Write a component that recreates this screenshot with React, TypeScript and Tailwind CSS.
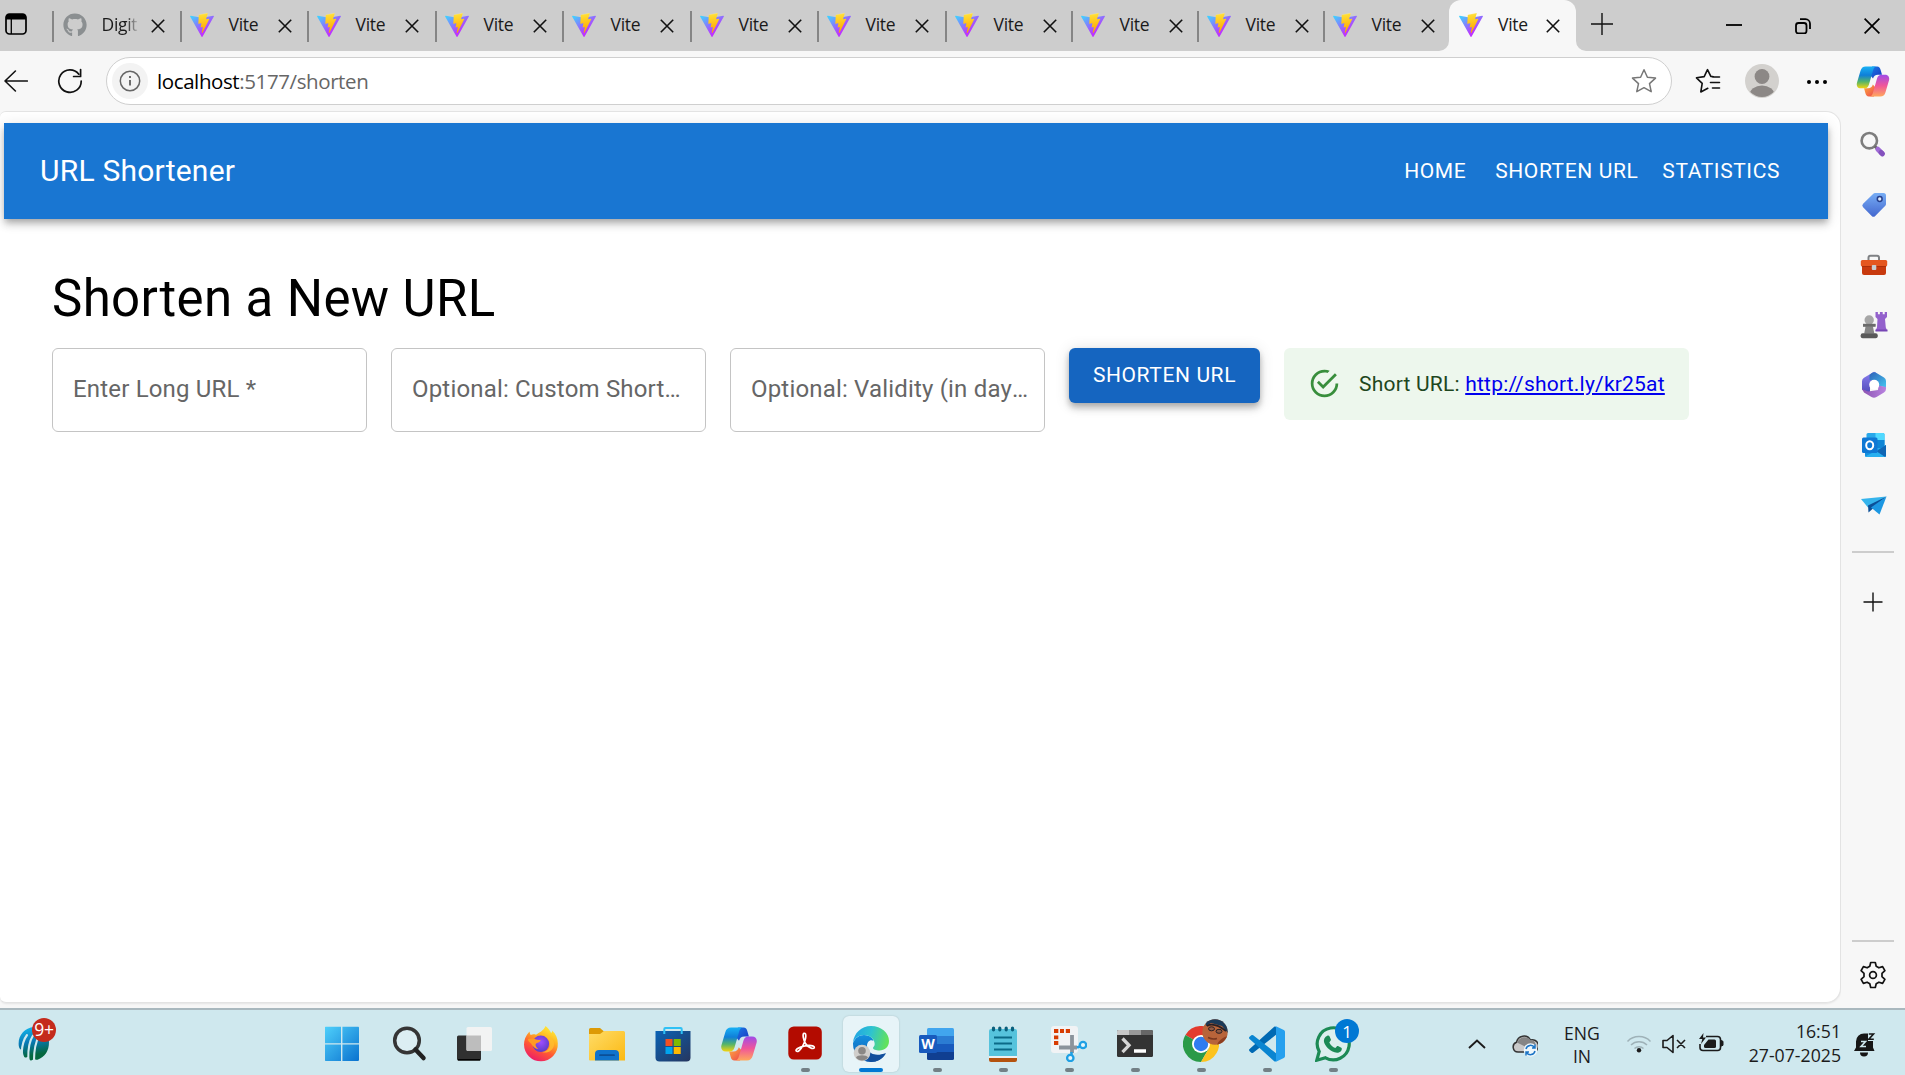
import React from "react";
import { FaGithub } from "react-icons/fa";

const UI = "font-['Open_Sans','Noto_Sans',sans-serif]";

function ViteLogo() {
  return (
    <svg viewBox="0 0 256 257" className="h-6 w-6 shrink-0">
      <defs>
        <linearGradient id="viteA" x1="-.828%" x2="57.636%" y1="7.652%" y2="78.411%">
          <stop offset="0%" stopColor="#41D1FF" />
          <stop offset="100%" stopColor="#BD34FE" />
        </linearGradient>
        <linearGradient id="viteB" x1="43.376%" x2="50.316%" y1="2.242%" y2="89.03%">
          <stop offset="0%" stopColor="#FFEA83" />
          <stop offset="8.333%" stopColor="#FFDD35" />
          <stop offset="100%" stopColor="#FFA800" />
        </linearGradient>
      </defs>
      <path fill="url(#viteA)" d="M255.153 37.938L134.897 252.976c-2.483 4.44-8.862 4.466-11.382.048L.875 37.958c-2.746-4.814 1.371-10.646 6.827-9.67l120.385 21.517a6.537 6.537 0 0 0 2.322-.004l117.867-21.483c5.438-.991 9.574 4.796 6.877 9.62Z" />
      <path fill="url(#viteB)" d="M185.432.063L96.44 17.501a3.268 3.268 0 0 0-2.634 3.014l-5.474 92.456a3.268 3.268 0 0 0 3.997 3.378l24.777-5.718c2.318-.535 4.413 1.507 3.936 3.838l-7.361 36.047c-.495 2.426 1.782 4.5 4.151 3.78l15.304-4.649c2.372-.72 4.652 1.36 4.15 3.788l-11.698 56.621c-.732 3.542 3.979 5.473 5.943 2.437l1.313-2.028l72.516-144.72c1.215-2.423-.88-5.186-3.54-4.672l-25.505 4.922c-2.396.462-4.435-1.77-3.759-4.114l16.646-57.705c.677-2.35-1.37-4.583-3.769-4.113Z" />
    </svg>
  );
}

function Cross() {
  return (
    <svg viewBox="0 0 14 14" className="h-3.5 w-3.5 shrink-0" stroke="#111" strokeWidth="1.6" fill="none">
      <path d="M.8 .8 13.2 13.2M13.2 .8 .8 13.2" />
    </svg>
  );
}

function CopilotLogo({ className }: { className: string }) {
  return (
    <svg viewBox="0 0 36 34" className={className}>
      <defs>
        <linearGradient id="cpA" x1="0" y1="0" x2="0" y2="1">
          <stop offset="0" stopColor="#19b1f5" />
          <stop offset=".4" stopColor="#0f7fd8" />
          <stop offset=".7" stopColor="#55b56a" />
          <stop offset="1" stopColor="#f4d40e" />
        </linearGradient>
        <linearGradient id="cpB" x1="0" y1="0" x2="0" y2="1">
          <stop offset="0" stopColor="#a04be8" />
          <stop offset=".5" stopColor="#f0569a" />
          <stop offset="1" stopColor="#ffa85c" />
        </linearGradient>
        <linearGradient id="cpC" x1="0" y1="0" x2="1" y2="1">
          <stop offset="0" stopColor="#1a7fe8" />
          <stop offset="1" stopColor="#1a35c0" />
        </linearGradient>
        <linearGradient id="cpD" x1="0" y1="0" x2="1" y2="1">
          <stop offset="0" stopColor="#ffb13d" />
          <stop offset="1" stopColor="#ec3f4e" />
        </linearGradient>
      </defs>
      <path fill="url(#cpC)" d="M17 .5h5.5c2.3 0 3.2 1.4 3.8 3.5l1.6 5.5h-4.5c-3 0-4.600 1.500-5.400 4.200L14 9z" />
      <path fill="url(#cpD)" d="M19 33.500h-5.500c-2.300 0-3.200-1.400-3.800-3.500L8.200 24.500h4.300c3 0 4.500-1.500 5.300-4.200L22 25z" />
      <path fill="url(#cpA)" d="M10 .5h11.500c-2 .5-2.800 2-3.500 4.500l-4.500 15.500c-.8 2.700-2.300 4-5 4H5c-4 0-5.500-3-4.500-6.500L4.300 5.200C5.200 2 7 .5 10 .5z" />
      <path fill="url(#cpB)" d="M26 33.500H14.500c2-.5 2.800-2 3.500-4.500l4.500-15.500c.8-2.700 2.300-4 5-4H31c4 0 5.500 3 4.500 6.500l-3.800 12.800c-.9 3.200-2.700 4.700-5.700 4.700z" />
    </svg>
  );
}

/* ---------- Tab strip ---------- */

function Tab({ width, kind = "vite" }: { width: string; kind?: "vite" | "github" }) {
  return (
    <div className={`${width} flex h-full shrink-0 items-center pb-[2px]`}>
      <div className="mt-[3px] h-[31px] w-[1.5px] shrink-0 bg-[#858585]" />
      {kind === "vite" ? (
        <>
          <div className="ml-[8px] flex h-6 w-6 shrink-0 items-center"><ViteLogo /></div>
          <span className="mt-[-1px] ml-[15px] w-[49px] text-[17.5px] tracking-[-0.3px] text-[#1a1a1a]">Vite</span>
        </>
      ) : (
        <>
          <FaGithub className="ml-[9px] h-6 w-6 shrink-0 text-[#8b8f91]" />
          <span className="mt-[-1px] ml-[15px] w-[49px] overflow-hidden">
            <span className="block w-[37px] overflow-hidden bg-linear-to-r from-[#1a1a1a] from-65% to-[#1a1a1a00] bg-clip-text text-[17.5px] tracking-[-0.3px] text-transparent">Digit</span>
          </span>
        </>
      )}
      <div className="mt-[2px] flex"><Cross /></div>
    </div>
  );
}

function TabStrip() {
  return (
    <div className="flex h-[51px] shrink-0 bg-[#cdcdcd]">
      <div className="flex w-[52px] shrink-0 items-center pl-[5px]">
        <svg viewBox="0 0 22 22" className="mt-[-3px] h-[22px] w-[22px]">
          <rect x="1" y="1" width="20" height="20" rx="3.500" fill="none" stroke="#000" strokeWidth="1.700" />
          <path d="M1 6.500V4a3 3 0 0 1 3-3h14a3 3 0 0 1 3 3v2.500z" fill="#000" />
          <path d="M6.300 6v15" stroke="#000" strokeWidth="1.300" />
        </svg>
      </div>
      <Tab width="w-[128px]" kind="github" />
      <Tab width="w-[127px]" />
      <Tab width="w-[128px]" />
      <Tab width="w-[127px]" />
      <Tab width="w-[128px]" />
      <Tab width="w-[127px]" />
      <Tab width="w-[128px]" />
      <Tab width="w-[126px]" />
      <Tab width="w-[126px]" />
      <Tab width="w-[126px]" />
      <Tab width="w-[126px]" />
      <div className="relative flex h-full w-[127px] shrink-0 items-center rounded-t-[12px] bg-[#f7f7f7] pb-[2px] pl-[10px]">
        <svg viewBox="0 0 10 10" className="absolute bottom-0 left-[-10px] h-2.5 w-2.5"><path d="M10 0v10H0A10 10 0 0 0 10 0z" fill="#f7f7f7" /></svg>
        <svg viewBox="0 0 10 10" className="absolute right-[-10px] bottom-0 h-2.5 w-2.5"><path d="M0 0v10h10A10 10 0 0 1 0 0z" fill="#f7f7f7" /></svg>
        <ViteLogo />
        <span className="mt-[-1px] ml-[15px] w-[48px] text-[17.5px] tracking-[-0.3px] text-[#1a1a1a]">Vite</span>
        <div className="mt-[2px] flex"><Cross /></div>
      </div>
      <div className="flex flex-1 items-center">
        <svg viewBox="0 0 22 22" className="mt-[-4px] ml-[15px] h-[22px] w-[22px]" stroke="#111" strokeWidth="1.400"><path d="M11 0v22M0 11h22" /></svg>
        <div className="flex-1" />
        <svg viewBox="0 0 16 16" className="mt-[-1px] mr-[53px] h-4 w-4" stroke="#000" strokeWidth="1.800"><path d="M0 8h16" /></svg>
        <svg viewBox="0 0 16 16" className="mr-[53px] h-4 w-4" fill="none" stroke="#000" strokeWidth="1.800">
          <rect x="1" y="5" width="10.500" height="10.500" rx="2.500" />
          <path d="M5 1.200h5.500a4.500 4.500 0 0 1 4.500 4.500V11" />
        </svg>
        <svg viewBox="0 0 16 16" className="mr-[25px] h-4 w-4" stroke="#000" strokeWidth="1.700"><path d="M.6 .6 15.400 15.400M15.400 .6 .6 15.400" /></svg>
      </div>
    </div>
  );
}

/* ---------- Address bar ---------- */

function Toolbar() {
  return (
    <div className="flex h-[60px] shrink-0 items-center bg-[#f7f7f7]">
      <svg viewBox="0 0 24 22" className="mt-[-1px] ml-1 h-[22px] w-6" fill="none" stroke="#111" strokeWidth="1.600" strokeLinejoin="round" strokeLinecap="round"><path d="M23.400 11H1M11.400 1 1 11l10.400 10" /></svg>
      <svg viewBox="0 0 26 26" className="ml-[29px] h-[26px] w-[26px]" fill="none" stroke="#111" strokeWidth="1.700" strokeLinecap="round"><path d="M24.200 13A11.200 11.200 0 1 1 21.800 6.200M23.600 1.500v7h-7" strokeLinejoin="round" /></svg>
      <div className="ml-[23px] flex h-[48px] w-[1566px] items-center rounded-full border-[1.5px] border-[#cfcfcf] bg-white pl-[5px]">
        <div className="flex h-9 w-9 items-center justify-center rounded-full bg-[#f3f3f3]">
          <svg viewBox="0 0 22 22" className="h-[22px] w-[22px]" fill="none" stroke="#666" strokeWidth="1.500"><circle cx="11" cy="11" r="9.700" /><path d="M11 10v5.500M11 6v1.900" strokeWidth="1.900" /></svg>
        </div>
        <span className={`${UI} mt-px ml-[9px] text-[20.5px] tracking-[-0.4px] text-[#666]`}><span className="text-black">localhost</span>:5177/shorten</span>
        <div className="flex-1" />
        <svg viewBox="0 0 26 26" className="mr-[14px] h-[26px] w-[26px]" fill="none" stroke="#777" strokeWidth="1.500" strokeLinejoin="round"><path d="M13 1.800 16.400 9.200 24.500 10.100 18.500 15.600 20.200 23.700 13 19.700 5.800 23.700 7.500 15.600 1.500 10.100 9.600 9.200z" /></svg>
      </div>
      <svg viewBox="0 0 26 26" className="ml-[23px] h-[26px] w-[26px]" fill="none" stroke="#111" strokeWidth="1.600" strokeLinejoin="round" strokeLinecap="round"><path d="M18.500 8.800 15.800 8.400 12.500 1.600 9.200 8.600 1.500 9.800 7.200 15.300 5.800 24 12.800 20.300M17.500 9h7M15.500 14.500h9M17.500 20h7" /></svg>
      <svg viewBox="0 0 34 34" className="ml-[24px] h-[34px] w-[34px]">
        <defs><clipPath id="prof"><circle cx="17" cy="17" r="16" /></clipPath></defs>
        <circle cx="17" cy="17" r="17" fill="#d3d1ce" />
        <g clipPath="url(#prof)" fill="#8c8886"><circle cx="17" cy="12.500" r="7.400" /><ellipse cx="17" cy="31" rx="12.500" ry="9.500" /></g>
      </svg>
      <svg viewBox="0 0 20 4" className="mt-px ml-[28px] h-1 w-5"><circle cx="2" cy="2" r="2" /><circle cx="10" cy="2" r="2" /><circle cx="18" cy="2" r="2" /></svg>
      <CopilotLogo className="ml-[29px] h-[31px] w-[34px]" />
    </div>
  );
}

/* ---------- Page content ---------- */

function Field({ label }: { label: string }) {
  return (
    <div className="flex h-[84px] w-[315px] items-center rounded-[6px] border border-[#c4c4c4] pb-[2px] pl-5">
      <span className="w-[279px] shrink-0 truncate text-[24px] tracking-[0.18px] text-[#666]">{label}</span>
    </div>
  );
}

function Page() {
  return (
    <main className="h-[892px] w-[1841px] overflow-hidden rounded-tl-[6px] rounded-r-[15px] rounded-bl-[6px] border border-l-0 border-[#e3e3e3] bg-white pt-[11px] pl-1 font-[Roboto,sans-serif] shadow-[0_1px_2px_rgba(0,0,0,0.08)]">
      <header className="flex h-[96px] w-[1824px] items-center bg-[#1976d2] px-9 text-white shadow-[0px_3px_6px_-1.5px_rgba(0,0,0,0.2),0px_6px_7.5px_0px_rgba(0,0,0,0.14),0px_1.5px_15px_0px_rgba(0,0,0,0.12)]">
        <h6 className="mt-[-2px] flex-1 text-[30px] font-normal tracking-[0.225px]">URL Shortener</h6>
        <nav className="mt-[2px] flex text-[21px] font-normal tracking-[0.6px]">
          <a className="min-w-[96px] px-3 text-center">HOME</a>
          <a className="px-3">SHORTEN URL</a>
          <a className="px-3">STATISTICS</a>
        </nav>
      </header>
      <section className="pt-[48px] pl-[48px]">
        <h4 className="h-[63px] text-[51px] leading-[63px] tracking-[0.375px] text-black">Shorten a New URL</h4>
        <div className="mt-[18px] flex items-start gap-6">
          <Field label="Enter Long URL *" />
          <Field label="Optional: Custom Shortcode" />
          <Field label="Optional: Validity (in days)" />
          <button className="h-[55px] w-[191px] rounded-[6px] bg-[#1565c0] text-[21px] font-normal tracking-[0.6px] whitespace-nowrap text-white shadow-[0px_3px_6px_-1.5px_rgba(0,0,0,0.2),0px_6px_7.5px_0px_rgba(0,0,0,0.14),0px_1.5px_15px_0px_rgba(0,0,0,0.12)]">SHORTEN URL</button>
          <div className="flex h-[72px] w-[405px] items-center rounded-[6px] bg-[#edf7ed] pl-6 text-[21px] tracking-[0.21px] whitespace-nowrap text-[#1e4620]">
            <svg viewBox="0 0 24 24" className="mt-[-2px] mr-[18px] h-[33px] w-[33px]" fill="#388e3c"><path d="M20,12A8,8 0 0,1 12,20A8,8 0 0,1 4,12A8,8 0 0,1 12,4C12.76,4 13.5,4.11 14.2,4.31L15.77,2.74C14.61,2.26 13.34,2 12,2A10,10 0 0,0 2,12A10,10 0 0,0 12,22A10,10 0 0,0 22,12M7.91,10.08L6.5,11.5L11,16L21,6L19.59,4.58L11,13.17L7.91,10.08Z" /></svg>
            <span className="leading-[30px]">Short URL: <a className="text-[#0000ee] underline">http://short.ly/kr25at</a></span>
          </div>
        </div>
      </section>
    </main>
  );
}

/* ---------- Edge sidebar ---------- */

function SideCell({ children }: { children: React.ReactNode }) {
  return <div className="flex h-[60.2px] shrink-0 items-center justify-center pl-px">{children}</div>;
}

function Sidebar() {
  return (
    <aside className="flex h-[897px] flex-1 flex-col bg-[#f7f7f7] pt-[3px]">
      <SideCell>
        <svg viewBox="0 0 28 28" className="mr-px h-7 w-7">
          <circle cx="10.300" cy="10.700" r="7.700" fill="none" stroke="#7d7d7d" strokeWidth="2.600" />
          <path d="m15.800 16.200 2.500 2.500" stroke="#6a6a6a" strokeWidth="3" />
          <path d="m18.800 19.200 4.500 4.500" stroke="#a06bd6" strokeWidth="5" strokeLinecap="round" />
          <path d="m22 22.400 1.400 1.400" stroke="#8452be" strokeWidth="5" strokeLinecap="round" />
        </svg>
      </SideCell>
      <SideCell>
        <svg viewBox="0 0 28 28" className="mt-px h-7 w-7">
          <defs><linearGradient id="tag" x1="0" y1="0" x2="0" y2="1"><stop offset="0" stopColor="#77adf5" /><stop offset="1" stopColor="#4468cf" /></linearGradient></defs>
          <path d="M15 2h8.500A2.500 2.500 0 0 1 26 4.500V13a2.500 2.500 0 0 1-.7 1.700L15.200 24.900a2.500 2.500 0 0 1-3.500 0l-8.600-8.700a2.500 2.500 0 0 1 0-3.500L13.300 2.700A2.500 2.500 0 0 1 15 2z" fill="url(#tag)" />
          <circle cx="19.700" cy="8" r="2.400" fill="#dce9fb" stroke="#263f8c" strokeWidth="1.500" />
        </svg>
      </SideCell>
      <SideCell>
        <svg viewBox="0 0 28 28" className="mt-[2px] h-7 w-7">
          <path d="M8.500 10V6.800A2 2 0 0 1 10.500 4.800h6.500A2 2 0 0 1 19 6.800V10" fill="none" stroke="#7f8184" strokeWidth="2" />
          <rect x="2" y="12" width="24" height="12" rx="2" fill="#c83a0e" />
          <rect x=".8" y="9" width="26.400" height="6.500" rx="1.500" fill="#e5571f" />
          <path d="M2 15.500h24" stroke="#ad2f0a" />
          <rect x="11.800" y="14" width="4.500" height="5" rx="1" fill="#c9cdd0" />
        </svg>
      </SideCell>
      <SideCell>
        <svg viewBox="0 0 28 28" className="h-7 w-7">
          <path d="M15.500 1h2.400v2.200h2V1h2.800v2.200h2V1H27v5l-2 2 .8 8.500 1.500 3.500H15.500l1.500-3.500L17.500 8l-2-2z" fill="#9361cc" />
          <path d="M15.500 18.500h12v2h-12z" fill="#7746b5" />
          <circle cx="9.200" cy="9" r="4.700" fill="#a6a6a6" />
          <path d="M3 12.800h12.500v3H13l1.300 6.700H4.200L5.500 15.800H3z" fill="#858585" />
          <path d="M3 13h12.500v2.500H3z" fill="#6b6b6b" />
          <rect x=".7" y="22.300" width="17" height="5" rx="2" fill="#5a5a5a" />
        </svg>
      </SideCell>
      <SideCell>
        <svg viewBox="0 0 28 28" className="h-7 w-7">
          <defs>
            <linearGradient id="mA" x1="0" y1="0" x2="1" y2="1"><stop offset="0" stopColor="#2e62b8" /><stop offset="1" stopColor="#45c5f0" /></linearGradient>
            <linearGradient id="mB" x1="0" y1="0" x2="0" y2="1"><stop offset="0" stopColor="#8b7ff0" /><stop offset="1" stopColor="#4e49b8" /></linearGradient>
            <linearGradient id="mC" x1="0" y1="0" x2="1" y2="0"><stop offset="0" stopColor="#8b52b0" /><stop offset="1" stopColor="#b983e0" /></linearGradient>
          </defs>
          <path d="M14 .8 4 6.700A4 4 0 0 0 2 10.200v8.500L10 23V12l6-4V1.500z" fill="url(#mB)" />
          <path d="M11.500 2.200Q14 .5 16.500 2L24 6.500A4 4 0 0 1 26 10v6.500l-7.500-1.800V12L9.500 8.800V4z" fill="url(#mA)" />
          <path d="M26 16v2a4 4 0 0 1-2 3.500L16.500 26q-2.500 1.500-5 0L4 21.500 2 18l6 2.500L18 19l.5-4.500z" fill="url(#mC)" />
          <circle cx="14.200" cy="13.800" r="5" fill="#ffffff" />
        </svg>
      </SideCell>
      <SideCell>
        <svg viewBox="0 0 28 28" className="h-7 w-7">
          <rect x="6.500" y="2" width="18" height="17" rx="1.500" fill="#28a8ea" />
          <path d="M15.500 2H23a1.500 1.500 0 0 1 1.500 1.500V9h-9z" fill="#50d9ff" />
          <path d="M15.500 9h9v8h-9z" fill="#0f86d6" />
          <path d="m5 14 11 6 10-6v10.500a1.500 1.500 0 0 1-1.500 1.500h-18A1.500 1.500 0 0 1 5 24.500z" fill="#1490df" />
          <path d="m26 14-10 6.500 9 5.500a1.500 1.500 0 0 0 1-1.500z" fill="#1066b5" />
          <path d="M5 25.500 16 20l9 6H6.500z" fill="#28b0f0" />
          <rect x="2" y="6.500" width="15.500" height="15.500" rx="1.500" fill="#0f78d4" />
          <ellipse cx="9.700" cy="14.200" rx="3.500" ry="4" fill="none" stroke="#fff" strokeWidth="2" />
        </svg>
      </SideCell>
      <SideCell>
        <svg viewBox="0 0 28 28" className="h-7 w-7">
          <path d="M1 8 26.500 5.500 8 16.500z" fill="#35b4ec" />
          <path d="m8 14.500 18.500-9L8.500 21.500z" fill="#0b4f97" />
          <path d="m11 16.500 15.500-11L19.500 23.500z" fill="#1c97e2" />
        </svg>
      </SideCell>
      <div className="mx-auto mt-[16px] h-[1.5px] w-[42px] shrink-0 bg-[#cdcdcd]" />
      <svg viewBox="0 0 20 20" className="mx-auto mt-[39px] h-5 w-5 shrink-0" stroke="#111" strokeWidth="1.400"><path d="M10 .5v19M.5 10h19" /></svg>
      <div className="flex-1" />
      <div className="mx-auto h-[2px] w-[42px] shrink-0 bg-[#cdcdcd]" />
      <svg viewBox="0 0 26 28" className="mx-auto mt-[19px] mb-[19px] h-7 w-[26px] shrink-0" fill="none" stroke="#111" strokeWidth="1.700" strokeLinejoin="round">
        <path d="M10.700 1.500h4.600l.9 3.800 2.700 1.500 3.700-1.200 2.300 4-2.900 2.700v3.400l2.900 2.700-2.300 4-3.700-1.200-2.700 1.500-.9 3.800h-4.600l-.9-3.800-2.700-1.500-3.700 1.200-2.300-4L4 15.700v-3.400L1.100 9.600l2.300-4 3.700 1.200 2.700-1.500z" />
        <circle cx="13" cy="14" r="3.400" />
      </svg>
    </aside>
  );
}

/* ---------- Taskbar ---------- */

function TaskIcon({ children, mark = "none" }: { children: React.ReactNode; mark?: "none" | "open" | "active" }) {
  return (
    <div className="relative flex h-full w-[66px] shrink-0 justify-center">
      {mark === "active" && <div className="absolute top-[6px] h-[56px] w-[56px] rounded-[6px] bg-[#e7f4f8] shadow-[0_0_2px_rgba(0,0,0,0.18)]" />}
      <div className="relative mt-[16px] h-9 w-9">{children}</div>
      {mark === "open" && <div className="absolute top-[58px] h-1 w-[9px] rounded-full bg-[#738086]" />}
      {mark === "active" && <div className="absolute top-[58px] h-1 w-6 rounded-full bg-[#0078d4]" />}
    </div>
  );
}

function Apps() {
  return (
    <>
      <TaskIcon>
        <svg viewBox="1 0 36 36">
          <defs><linearGradient id="win" x1="0" y1="0" x2="1" y2="1" gradientUnits="objectBoundingBox"><stop offset="0" stopColor="#4fd0fb" /><stop offset="1" stopColor="#0a72cf" /></linearGradient></defs>
          <path d="M1.500.7H17v16.600H.7V1.500zM18.400.7H34.500l.5.8v15.800H18.400zM.7 18.500H17V35H1.500l-.8-.8zM18.400 18.500H35v15.700l-.8.8H18.400z" fill="url(#win)" />
        </svg>
      </TaskIcon>
      <TaskIcon>
        <svg viewBox="0 0 36 36" fill="none"><circle cx="16" cy="14.500" r="12.300" fill="#dceef3" stroke="#353535" strokeWidth="3.500" /><path d="m24.500 23.500 8 8.500" stroke="#222" strokeWidth="4.500" strokeLinecap="round" /></svg>
      </TaskIcon>
      <TaskIcon>
        <svg viewBox="0 0 36 36">
          <rect x="0" y="9.500" width="24" height="25" rx="1.500" fill="#303030" /><path d="M1 33.800h22" stroke="#000" strokeWidth="1.500" />
          <rect x="9.500" y="1" width="25.500" height="24" rx="1.500" fill="#f2f3f3" /><path d="M9.500 9.500H24V25H11a1.500 1.500 0 0 1-1.500-1.500z" fill="#bdbdbd" />
        </svg>
      </TaskIcon>
      <TaskIcon>
        <svg viewBox="0 0 36 36">
          <defs>
            <linearGradient id="ffA" x1=".8" y1="0" x2=".3" y2="1"><stop offset="0" stopColor="#fff13c" /><stop offset=".35" stopColor="#ffb321" /><stop offset=".65" stopColor="#ff5a33" /><stop offset="1" stopColor="#ec1a6b" /></linearGradient>
            <radialGradient id="ffB" cx=".5" cy=".4" r=".6"><stop offset="0" stopColor="#a04dff" /><stop offset="1" stopColor="#5b3cc4" /></radialGradient>
          </defs>
          <path d="M22.500 0c2.500 1.500 4.500 4.500 5.500 7 1-.5 1.200-1.500 1-2.500 4 3.500 5.800 8 5.800 13A17 17 0 0 1 18 35.300 17 17 0 0 1 1 18.500C1 14.500 2.500 9.500 6.500 5.500c.2 1.500.5 2.500 1.200 3.500 2-.8 3.300-.8 5.300-.3C16 6.500 20.500 5 22.500 0z" fill="url(#ffA)" />
          <circle cx="17.800" cy="17.800" r="8.300" fill="url(#ffB)" />
          <path d="M5 13c3-1 6-.5 8 .5 1.500.8 3.500 0 4.800.8-.5 1.500-2.800 2.500-4.300 3-1.700.8-.8 4 2 5.700-5-.5-6-4-8-6-1.500-1.500-2.500-2-2.500-4z" fill="#ff9a24" />
          <path d="M21 9.500c4 1.500 6.500 4.500 6 9.500-.5 4-4 7-8 7 5 2 11-1 12-7C31.500 14 27 9 21 9.500z" fill="#ffbe2e" opacity=".8" />
        </svg>
      </TaskIcon>
      <TaskIcon>
        <svg viewBox="0 0 36 36">
          <defs><linearGradient id="fold" x1="0" y1="0" x2="1" y2="1"><stop offset="0" stopColor="#ffdc68" /><stop offset="1" stopColor="#fbb912" /></linearGradient></defs>
          <path d="M0 3.500A1.500 1.500 0 0 1 1.500 2H11l4 3.500V10H0z" fill="#dd9a06" />
          <path d="M0 8h11l4-3h19.500A1.500 1.500 0 0 1 36 6.500v28H1A1 1 0 0 1 0 33.500z" fill="url(#fold)" />
          <path d="M6 34.500V28a4 4 0 0 1 4-4h16a4 4 0 0 1 4 4v6.500z" fill="#0f73cc" /><path d="M11 29.200h14" stroke="#0b4f97" strokeWidth="1.800" strokeLinecap="round" />
        </svg>
      </TaskIcon>
      <TaskIcon>
        <svg viewBox="0 0 36 36">
          <defs><linearGradient id="store" x1="0" y1="0" x2="1" y2="1"><stop offset="0" stopColor="#0a62b5" /><stop offset="1" stopColor="#26365e" /></linearGradient></defs>
          <path d="M.5 5h35v26.500a4 4 0 0 1-4 4h-27a4 4 0 0 1-4-4z" fill="url(#store)" />
          <path d="M9.300 8V3a1 1 0 0 1 1-1h15.400a1 1 0 0 1 1 1v5" fill="none" stroke="#2fc1f5" strokeWidth="2" />
          <path d="M10.500 13h7v7h-7z" fill="#f25022" /><path d="M18.700 13h7v7h-7z" fill="#7fba00" /><path d="M10.500 21h7v7h-7z" fill="#00a4ef" /><path d="M18.700 21h7v7h-7z" fill="#ffb900" />
        </svg>
      </TaskIcon>
      <TaskIcon><CopilotLogo className="mt-px h-[34px] w-9" /></TaskIcon>
      <TaskIcon mark="open">
        <svg viewBox="0 0 36 36">
          <rect x="1.300" y=".5" width="33.500" height="33" rx="5.500" fill="#b30b00" />
          <path d="M17 7.300c2.800-.6 1.800 5.500.5 8.700-1.500 4-4.800 9.500-7.300 9.500-3.500-.8 1-4.700 7.800-5.700 3.500-.6 9.700-.6 9.300 1.700-.8 2.800-6.800-.8-8.800-4C16.800 14.700 15 8 17 7.300z" fill="none" stroke="#fff" strokeWidth="1.700" />
        </svg>
      </TaskIcon>
      <TaskIcon mark="active">
        <svg viewBox="0 0 36 36">
          <defs>
            <linearGradient id="edA" x1="0" y1=".2" x2="1" y2=".4"><stop offset="0" stopColor="#1fa3e6" /><stop offset=".5" stopColor="#2fc3cf" /><stop offset="1" stopColor="#62e25a" /></linearGradient>
            <linearGradient id="edB" x1="0" y1="0" x2="0" y2="1"><stop offset="0" stopColor="#1490df" /><stop offset="1" stopColor="#0f5bb0" /></linearGradient>
          </defs>
          <path d="M0 17C2 12 6 9 11 9c6 0 9.500 4 9.500 6-3-2-7 1-6.500 6 .8 7 8 10 18.500 7C29 33 24 36 18 36 8 36 0 28 0 18z" fill="url(#edB)" />
          <path d="M14 20c.5 8 9 11 19 7-3 6-9 9-15 9-6-2-9.500-9-4-16z" fill="#124f9c" />
          <path d="M0 16.500C1 7 8.500 0 18 0c10.500 0 18 7 18 15 0 6-4.500 9.500-9.500 9.500-3.500 0-6.500-1-6.500-2.500 0-1 1.700-1.500 1.700-4C21.700 13 17 9 11 9 6 9 2 12 0 16.500z" fill="url(#edA)" />
          <circle cx="9" cy="27" r="8.300" fill="#d0cecb" /><circle cx="9" cy="24.800" r="3.800" fill="#8a8785" /><path d="M3 31.500c1.500-3 10.500-3 12 0-2.500 4-9.500 4-12 0z" fill="#8a8785" />
        </svg>
      </TaskIcon>
      <TaskIcon mark="open">
        <svg viewBox="0 0 36 36">
          <path d="M8 10V3.500A1.500 1.500 0 0 1 9.500 2h24A1.500 1.500 0 0 1 35 3.500V10z" fill="#41a5ee" /><path d="M8 10h27v8H8z" fill="#2b7cd3" /><path d="M8 18h27v8H8z" fill="#185abd" /><path d="M8 26h27v6.500a1.500 1.500 0 0 1-1.500 1.500h-24A1.500 1.500 0 0 1 8 32.500z" fill="#103f91" />
          <rect x="0" y="9" width="18" height="18" rx="1.500" fill="#185abd" />
          <text x="9" y="23" textAnchor="middle" fontSize="14" fontWeight="700" fill="#fff" fontFamily="Open Sans, sans-serif">W</text>
        </svg>
      </TaskIcon>
      <TaskIcon mark="open">
        <svg viewBox="0 0 36 36">
          <path d="M4 30h28v4a2 2 0 0 1-2 2H6a2 2 0 0 1-2-2z" fill="#b4530f" /><path d="M4 29h28v3H4z" fill="#eef0f0" />
          <path d="M4 5a2 2 0 0 1 2-2h24a2 2 0 0 1 2 2v25H4z" fill="#56c3dc" />
          <path d="M9 11.500h18M9 17.500h18M9 23.500h18" stroke="#0b6a87" strokeWidth="1.800" />
          <path d="M8.500 2v1.800M14.800 2v1.800M21.200 2v1.800M27.500 2v1.800" stroke="#0a5f7c" strokeWidth="3.200" strokeLinecap="round" />
        </svg>
      </TaskIcon>
      <TaskIcon mark="open">
        <svg viewBox="0 0 36 36">
          <rect x="0" y="0" width="27" height="27" rx="3" fill="#f1f3f5" />
          <path d="M3 3h4.300v4H3zM9 3h4v4H9zM14.800 3H19v4h-4.200zM3 9.500h4.300v3.700H3zM3 15h4.300v4H3z" fill="#d83b01" />
          <path d="M8 21.500h18M21 9v18" stroke="#8b939b" strokeWidth="3.800" />
          <circle cx="32" cy="19" r="3.200" fill="#e7f5fa" stroke="#1fa0e4" strokeWidth="2.300" /><circle cx="19.300" cy="32" r="3.200" fill="#e7f5fa" stroke="#1fa0e4" strokeWidth="2.300" />
          <path d="m26 21.500 3-1M20.500 26v3" stroke="#1fa0e4" strokeWidth="2.500" />
        </svg>
      </TaskIcon>
      <TaskIcon mark="open">
        <svg viewBox="0 0 36 36">
          <rect x="0" y="4" width="36" height="27" rx="1.500" fill="#333" /><path d="M0 9V5.500A1.500 1.500 0 0 1 1.500 4H12v5z" fill="#c8c8c8" /><path d="M12 4h12v5H12z" fill="#999" /><path d="M24 4h10.500A1.500 1.500 0 0 1 36 5.500V9H24z" fill="#666" />
          <path d="m5.500 12.500 6.500 6.800-6.500 6.800" fill="none" stroke="#d4d4d4" strokeWidth="3.300" /><path d="M17 25h12" stroke="#fff" strokeWidth="3.500" />
        </svg>
      </TaskIcon>
      <TaskIcon mark="open">
        <svg viewBox="0 0 36 36">
          <path d="M18 18 2.400 9A18 18 0 0 1 33.600 9z" fill="#e33b2e" /><path d="M18 18 2.400 9A18 18 0 0 0 18 36l7.800-13.500z" fill="#2a9a48" /><path d="M18 9h15.600A18 18 0 0 1 18 36l7.800-13.500z" fill="#fcc31e" />
          <circle cx="18" cy="18" r="9" fill="#fff" /><circle cx="18" cy="18" r="7.200" fill="#2f7cf0" />
        </svg>
        <svg viewBox="0 0 26 26" className="absolute top-[-7px] left-[18.5px] h-[26px] w-[26px]">
          <defs><clipPath id="avatar"><circle cx="13" cy="13" r="12.700" /></clipPath></defs>
          <g clipPath="url(#avatar)">
            <rect width="26" height="26" fill="#b8643a" />
            <path d="M3 0h23v14L20 7 9 4 4 7z" fill="#1b3a58" />
            <path d="M5 7c5-3 11-1 19 5" stroke="#2a2024" strokeWidth="1.800" fill="none" />
            <ellipse cx="9.500" cy="9.800" rx="3" ry="2" fill="#8f5a44" stroke="#2a2024" strokeWidth="1" /><ellipse cx="17" cy="12.300" rx="3" ry="2" fill="#8f5a44" stroke="#2a2024" strokeWidth="1" />
            <path d="M6 18.500c3 1.500 6 2 9 1" stroke="#7a3820" strokeWidth="1.400" fill="none" /><path d="M15 26c1-4 6-8 11-9v9z" fill="#8d3e20" />
          </g>
        </svg>
      </TaskIcon>
      <TaskIcon mark="open">
        <svg viewBox="0 0 36 36">
          <path d="M27 8.800 4.200 26.700a1.500 1.500 0 0 1-1.900 0L.6 25.200a1.500 1.500 0 0 1 0-2.200L25.500.5 27 1z" fill="#0069b3" />
          <path d="M27 27.200 4.200 9.300a1.500 1.500 0 0 0-1.900 0L.6 10.800a1.500 1.500 0 0 0 0 2.200l24.900 22.500 1.500-.5z" fill="#0a85d1" />
          <path d="M25.500.5a2 2 0 0 1 2 0l7.300 3.500A2 2 0 0 1 36 5.800v24.400a2 2 0 0 1-1.200 1.800l-7.300 3.500a2 2 0 0 1-2 0c.9.200 1.500-.5 1.500-1.500V2C27 1 26.400.3 25.500.5z" fill="#26a0ee" />
        </svg>
      </TaskIcon>
      <TaskIcon mark="open">
        <svg viewBox="0 0 36 36">
          <path d="M1.800 34.200 4.200 25.500A16 16 0 1 1 10.500 31.800z" fill="#dcefee" stroke="#1c8a55" strokeWidth="3.200" />
          <path d="M12.300 9.700c.9-.5 2 0 2.300.7l1.300 3.200c.2.700-.2 1.200-1.600 2.900 1.500 3 3.500 4.500 6 5.600 1.500-1.800 2-2.300 2.700-2l3.300 1.600c.8.500.7 2-.2 3.200-1.500 1.700-3.800 2.300-6.500 1.400-5.500-1.700-9.500-6.500-10.600-10.300-.6-2.500.9-5.200 3.300-6.300z" fill="#1c8a55" />
        </svg>
        <span className="absolute top-[-7px] left-[20px] flex h-6 w-6 items-center justify-center rounded-full bg-[#0078d4] text-[17px] leading-none text-white">1</span>
      </TaskIcon>
    </>
  );
}

function Taskbar() {
  return (
    <footer className={`${UI} flex h-[67px] shrink-0 border-t-2 border-[#a9b8be] bg-[#cfe8ee] text-[#1b1b1b]`}>
      <div className="relative w-[310px] shrink-0 pt-[16px] pl-[18px]">
        <svg viewBox="0 0 32 36" className="h-9 w-8">
          <defs><linearGradient id="ball" x1=".3" y1="0" x2=".5" y2="1"><stop offset="0" stopColor="#12b5ea" /><stop offset=".45" stopColor="#0878b5" /><stop offset=".85" stopColor="#04683f" /></linearGradient></defs>
          <path d="M16 1C6 2-.5 10 .8 20c.3 2 1 3 2 3.500l2 .5c0 3 .5 5 1.500 7 1 .8 2 .8 2.700 0l2 0c0 1 .5 2.500 1.200 3.200.8.500 1.600.3 2-.2L17 33c.5 1 1.500 1 2.500.700C27 31 31 25 31 16 31 8 25 1 16 1z" fill="url(#ball)" />
          <path d="M9 9C6 13 4.200 18 3.800 26M15 9.500C11.500 15 10 22 10.300 32.500M21 10c-4 7-5 15-5 24.500" fill="none" stroke="#cfe8ee" strokeWidth="2.100" strokeLinecap="round" />
        </svg>
        <span className="absolute top-[8px] left-[32px] flex h-6 w-6 items-center justify-center rounded-full bg-[#c42b1c] text-[17.5px] leading-none tracking-[-0.3px] text-white">9+</span>
      </div>
      <Apps />
      <div className="flex flex-1 pb-1">
        <svg viewBox="0 0 18 10" className="mt-[29px] ml-[102px] h-2.5 w-[18px]" fill="none" stroke="#1b1b1b" strokeWidth="1.900"><path d="m1 9 8-7.500L17 9" /></svg>
        <svg viewBox="0 0 26 22" className="mt-[25px] ml-[26px] h-[22px] w-[26px]">
          <path d="M6 17a5 5 0 0 1-1.500-9.700A7.500 7.500 0 0 1 18.500 5a6 6 0 0 1 3.500 12z" fill="#c9c9c9" stroke="#333" strokeWidth="1.500" /><path d="M5 7.500C7 2 15 0 18.500 5c3 0 5 2 5 5L14 12z" fill="#858585" />
          <circle cx="18.500" cy="15" r="6.800" fill="#eef7fb" /><path d="M14 14a4.600 4.600 0 0 1 8.500-1.300M23 16a4.600 4.600 0 0 1-8.500 1.300M23 9.500v3.500h-3M14 20.500V17h3" fill="none" stroke="#1b74c5" strokeWidth="1.500" />
        </svg>
        <div className="mt-[12px] ml-[20px] w-[48px] text-center text-[17.6px] leading-[23px]"><div>ENG</div><div>IN</div></div>
        <svg viewBox="0 0 26 20" className="mt-[23px] ml-[20px] h-5 w-[26px]" fill="none" stroke="#9fb2b8" strokeWidth="1.500"><path d="M1.500 8.500a16 16 0 0 1 23 0M5 12a11.500 11.500 0 0 1 16 0M8.500 15.500a6.500 6.500 0 0 1 9 0" /><circle cx="13" cy="17.200" r="2.200" fill="#1b1b1b" stroke="none" /></svg>
        <svg viewBox="0 0 24 20" className="mt-[24px] ml-[10px] h-5 w-6" fill="none" stroke="#1b1b1b" strokeWidth="1.600" strokeLinejoin="round"><path d="M1 6.500h4L11 1.500v17L5 13.500H1zM15 6l8 8M23 6l-8 8" /></svg>
        <svg viewBox="0 0 26 20" className="mt-[23px] ml-[12px] h-5 w-[26px]"><path d="M8 3.500h11.500a3 3 0 0 1 3 3v8a3 3 0 0 1-3 3H5a3 3 0 0 1-3-3V11" fill="none" stroke="#1b1b1b" strokeWidth="1.600" /><path d="M23 7.500l2 .8v4l-2 .8z" stroke="#1b1b1b" fill="#1b1b1b" /><path d="M10.500 6.500h6a1.500 1.500 0 0 1 1.500 1.500v5.500a1.500 1.500 0 0 1-1.500 1.500h-9A1.500 1.500 0 0 1 6 13.500V12z" fill="#1b1b1b" /><path d="M5.500 0 1 6h3.300L3 11l5-6.500H5z" fill="#1b1b1b" /></svg>
        <div className="mt-[10px] flex-1 text-right text-[17.700px] leading-[23.500px]"><div>16:51</div><div>27-07-2025</div></div>
        <svg viewBox="0 0 24 26" className="mt-[21px] mr-[28px] ml-[12px] h-[26px] w-6"><path d="M3 10.500a8 8 0 0 1 8-8h9v14l1.500 3.500H1L3 16.500z" fill="#161616" /><path d="M7 21.500h8a4 4 0 0 1-8 0z" fill="#161616" /><path d="M8 10.500h4.500L8 15.500h5" fill="none" stroke="#cfe8ee" strokeWidth="1.600" /><path d="M15 1h9v9h-9z" fill="#cfe8ee" /><path d="M15.800 3h4.700l-4.700 5.300h5" fill="none" stroke="#161616" strokeWidth="1.600" /></svg>
      </div>
    </footer>
  );
}

export default function App() {
  return (
    <div className={`${UI} flex h-[1075px] w-[1905px] flex-col overflow-hidden bg-[#f7f7f7]`}>
      <TabStrip />
      <Toolbar />
      <div className="flex h-[897px] shrink-0">
        <Page />
        <Sidebar />
      </div>
      <Taskbar />
    </div>
  );
}
